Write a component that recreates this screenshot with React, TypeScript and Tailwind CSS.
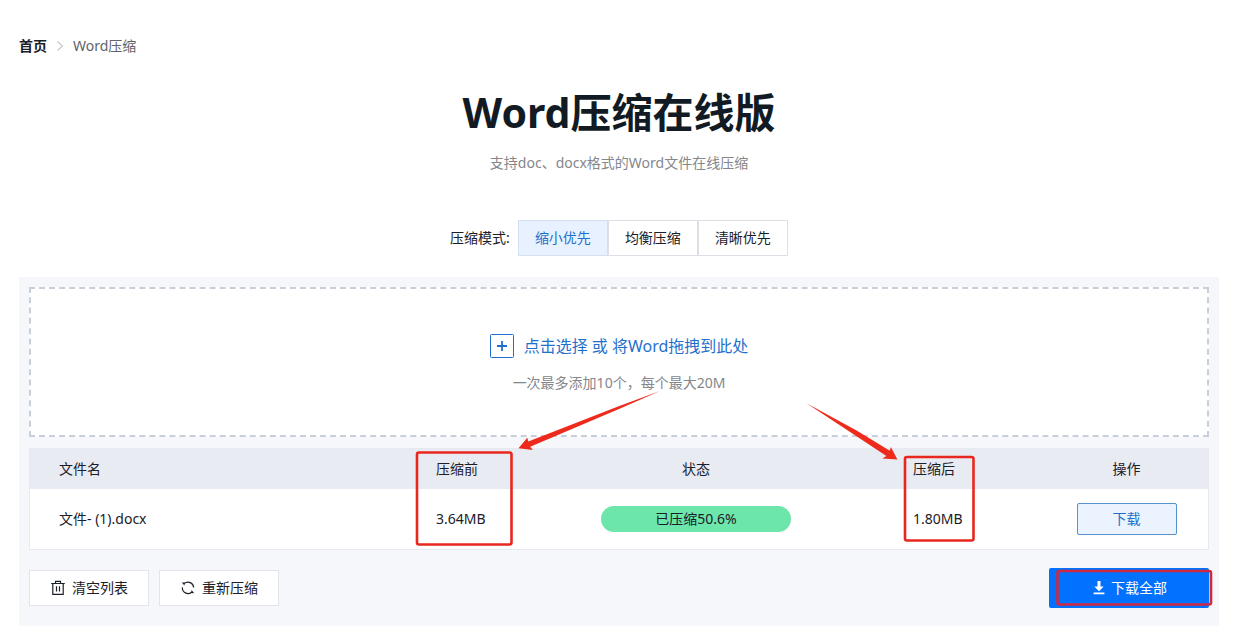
import React, { useState } from "react";

const modes = ["缩小优先", "均衡压缩", "清晰优先"];

const files = [
  { name: "文件- (1).docx", before: "3.64MB", status: "已压缩50.6%", after: "1.80MB" },
];

function TrashIcon() {
  return (
    <svg className="w-4 h-4" viewBox="0 0 16 16" fill="none" stroke="currentColor" strokeWidth="1.2" aria-hidden="true">
      <path d="M1.2 3.5h13.6M5.5 3.2V1.3h5v1.9M2.8 3.5v10.9h10.4V3.5M6.5 6.2v5.2M9.5 6.2v5.2" />
    </svg>
  );
}

function RefreshIcon() {
  return (
    <svg className="w-4 h-4" viewBox="0 0 16 16" fill="none" stroke="currentColor" strokeWidth="1.2" aria-hidden="true">
      <path d="M4.4 3.4A5.6 5.6 0 0 1 13.6 7.6M2.4 7.4A5.6 5.6 0 0 0 11.6 12.2" />
      <path d="M1.8 2.4l3.2.2-.6 3zM14.2 13.2l-3.2-.2.6-3z" fill="currentColor" stroke="none" />
    </svg>
  );
}

function DownloadIcon() {
  return (
    <svg className="w-4 h-4" viewBox="0 0 16 16" fill="currentColor" aria-hidden="true">
      <path d="M6.5 1h3v5.5h3.2L8 11.2 3.3 6.5h3.2zM2.6 12.6h10.8v1.6H2.6z" />
    </svg>
  );
}

// Hand-drawn style callouts over the result table
function Callouts() {
  return (
    <svg
      className="absolute left-0 top-0 pointer-events-none"
      width="1239"
      height="633"
      viewBox="0 0 1239 633"
      fill="none"
      stroke="#e8281f"
      strokeWidth="2.6"
      aria-hidden="true"
    >
      <rect x="417" y="452.5" width="94.5" height="92" rx="2" />
      <rect x="905" y="457" width="68.5" height="83.5" rx="2" />
      <rect x="1057.5" y="571" width="153.5" height="33.5" rx="2" stroke="#cf2840" />
      <g fill="#ee2a1c" stroke="none">
        <path d="M660 391L618 406.5L528.3 441.5L527.3 437.8L518.5 448.2L532.8 450L530.2 446.8L619 409z" />
        <path d="M806.5 403.2L857 430.8L889.8 450.8L890.9 447L897.4 459.5L882.3 458.6L886.4 455.9L855 435.2z" />
      </g>
    </svg>
  );
}

export default function App() {
  const [mode, setMode] = useState(0);

  return (
    <div className="relative bg-white pl-[19px] pr-5 pt-9 pb-2 text-sm leading-5 text-[#1b2028] font-['Noto_Sans','Noto_Sans_CJK_SC',sans-serif]">
      <nav className="flex items-center">
        <a href="#" className="font-bold">首页</a>
        <svg className="w-2 h-3 mx-[9px]" viewBox="0 0 8 12" fill="none" stroke="#c5c8ce" strokeWidth="1.2" aria-hidden="true">
          <path d="M1.5 1.5L6.5 6L1.5 10.5" />
        </svg>
        <span className="text-[#606468]">Word压缩</span>
      </nav>

      <header className="mt-7 text-center">
        <h1 className="text-[41px] leading-14 font-bold text-[#121b24]">Word压缩在线版</h1>
        <p className="mt-[13px] text-[#85878b]">支持doc、docx格式的Word文件在线压缩</p>
      </header>

      <div className="mt-[47px] flex items-center justify-center">
        <span className="mr-2">压缩模式:</span>
        <div className="flex">
          {modes.map((label, i) => (
            <button
              key={label}
              type="button"
              aria-pressed={mode === i}
              onClick={() => setMode(i)}
              className={
                mode === i
                  ? "w-[90px] h-9 border border-[#d4dff0] bg-[#e8f1ff] text-[#1f6fca]"
                  : "w-[90px] h-9 border border-[#dcdfe6] bg-white"
              }
            >
              {label}
            </button>
          ))}
        </div>
      </div>

      <main className="mt-[21px] bg-[#f5f7fa] px-2.5 pt-2.5 pb-[18px]">
        <div className="flex flex-col items-center h-[150px] pt-[45px] border-2 border-dashed border-[#c9cfd9] bg-white">
          <button type="button" className="flex items-center gap-2.5 text-base text-[#1f70cc]">
            <svg className="w-6 h-6" viewBox="0 0 24 24" fill="none" stroke="currentColor" aria-hidden="true">
              <rect x="0.5" y="0.5" width="23" height="23" rx="1" />
              <path d="M12 7v10M7 12h10" strokeWidth="1.8" />
            </svg>
            点击选择 或 将Word拖拽到此处
          </button>
          <p className="mt-[15px] text-[#85878b]">一次最多添加10个，每个最大20M</p>
        </div>

        <div className="mt-[11px] border border-[#e6e9f0] bg-white">
          <table className="w-full table-fixed text-left">
            <thead className="bg-[#e9ebf3]">
              <tr className="h-10">
                <th className="pl-[29px] font-normal">文件名</th>
                <th className="w-[150px] font-normal">压缩前</th>
                <th className="w-[220px] text-center font-normal">状态</th>
                <th className="w-[239px] pl-[107px] font-normal">压缩后</th>
                <th className="w-[163px] text-center font-normal">操作</th>
              </tr>
            </thead>
            <tbody>
              {files.map((file) => (
                <tr key={file.name} className="h-15">
                  <td className="pl-[29px]">{file.name}</td>
                  <td>{file.before}</td>
                  <td>
                    <div className="mx-auto w-[190px] rounded-full bg-[#6ce6aa] py-[3px] text-center">{file.status}</div>
                  </td>
                  <td className="pl-[107px]">{file.after}</td>
                  <td className="text-center">
                    <button type="button" className="w-[100px] h-8 rounded-xs border border-[#5592cf] bg-[#ebf3ff] text-[#1f6fca]">
                      下载
                    </button>
                  </td>
                </tr>
              ))}
            </tbody>
          </table>
        </div>

        <div className="mt-[18px] flex items-center gap-2.5">
          <button type="button" className="flex items-center justify-center gap-1.5 w-[120px] h-9 border border-[#e1e4ea] bg-white">
            <TrashIcon />
            清空列表
          </button>
          <button type="button" className="flex items-center justify-center gap-1.5 w-[120px] h-9 border border-[#e1e4ea] bg-white">
            <RefreshIcon />
            重新压缩
          </button>
          <button type="button" className="ml-auto flex items-center justify-center gap-1 w-40 h-10 rounded-xs bg-[#0072ff] text-white">
            <DownloadIcon />
            下载全部
          </button>
        </div>
      </main>

      <Callouts />
    </div>
  );
}
